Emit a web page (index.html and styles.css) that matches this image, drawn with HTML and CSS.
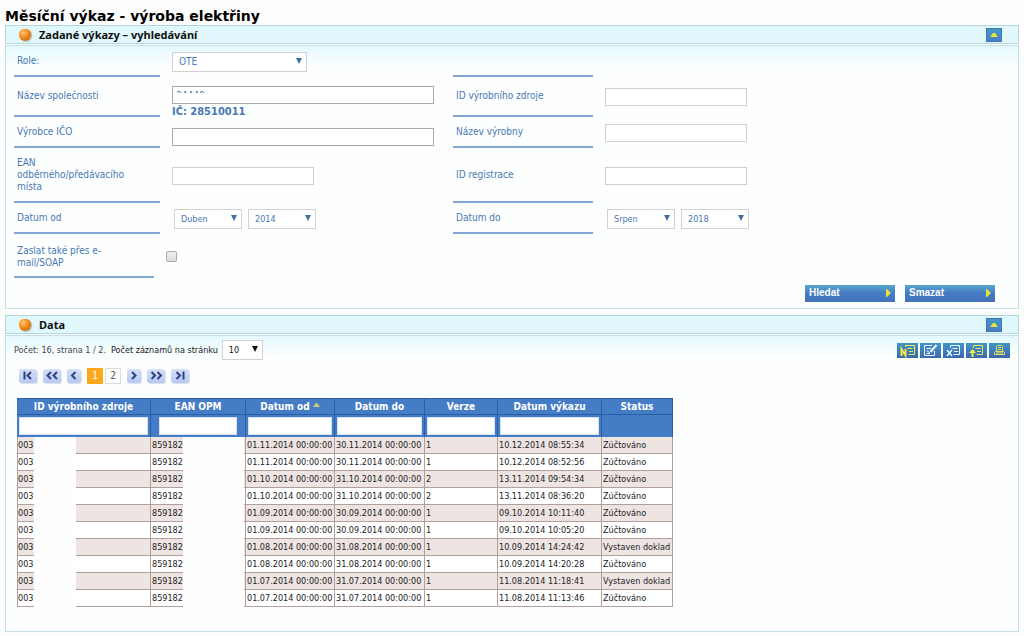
FILE: index.html
```html
<!DOCTYPE html>
<html lang="cs">
<head>
<meta charset="utf-8">
<title>Měsíční výkaz - výroba elektřiny</title>
<link rel="stylesheet" href="styles.css">
</head>
<body>
<h1 class="title">Měsíční výkaz - výroba elektřiny</h1>

<section class="panel">
  <header class="panel-head">
    <span class="ball"></span>
    <h2>Zadané výkazy – vyhledávání</h2>
    <button class="fold" type="button" aria-label="Sbalit"><svg width="8" height="4" viewBox="0 0 8 4"><path d="M0 4L3 0h2l3 4z" fill="#e8e33c"/></svg></button>
  </header>
  <form class="panel-body search">
    <div class="grid">
      <label class="lbl role" for="role">Role:</label>
      <div class="field"><span class="select wide"><select id="role"><option>OTE</option></select></span></div>
      <span class="lbl"></span><span></span>

      <label class="lbl company" for="company">Název společnosti</label>
      <div class="field stack"><span class="masked"><input class="text long" id="company" type="text" value="24440"></span><strong>IČ: 28510011</strong></div>
      <label class="lbl" for="source">ID výrobního zdroje</label>
      <div class="field"><input class="text" id="source" type="text"></div>

      <label class="lbl" for="ico">Výrobce IČO</label>
      <div class="field low"><input class="text long" id="ico" type="text"></div>
      <label class="lbl" for="plant">Název výrobny</label>
      <div class="field"><input class="text" id="plant" type="text"></div>

      <label class="lbl ean" for="ean">EAN odběrného/předávacího místa</label>
      <div class="field"><input class="text" id="ean" type="text"></div>
      <label class="lbl" for="reg">ID registrace</label>
      <div class="field"><input class="text" id="reg" type="text"></div>

      <label class="lbl" for="from">Datum od</label>
      <div class="field dates">
        <span class="select"><select id="from"><option>Duben</option></select></span>
        <span class="select"><select aria-label="Rok od"><option>2014</option></select></span>
      </div>
      <label class="lbl" for="to">Datum do</label>
      <div class="field dates">
        <span class="select"><select id="to"><option>Srpen</option></select></span>
        <span class="select"><select aria-label="Rok do"><option>2018</option></select></span>
      </div>
    </div>
    <div class="mail">
      <label class="lbl" for="mail">Zaslat také přes e-mail/SOAP</label>
      <input id="mail" type="checkbox">
    </div>
    <div class="actions">
      <button class="action" type="submit">Hledat<svg width="5" height="8" viewBox="0 0 5 8"><path d="M0 0h1l4 4-4 4H0z" fill="#e3e33a"/></svg></button>
      <button class="action" type="reset">Smazat<svg width="5" height="8" viewBox="0 0 5 8"><path d="M0 0h1l4 4-4 4H0z" fill="#e3e33a"/></svg></button>
    </div>
  </form>
</section>

<section class="panel">
  <header class="panel-head">
    <span class="ball"></span>
    <h2>Data</h2>
    <button class="fold" type="button" aria-label="Sbalit"><svg width="8" height="4" viewBox="0 0 8 4"><path d="M0 4L3 0h2l3 4z" fill="#e8e33c"/></svg></button>
  </header>
  <div class="panel-body data">
    <div class="bar">
      <span class="count">Počet: 16, strana 1 / 2.</span>
      <label for="per">Počet záznamů na stránku</label>
      <span class="select small"><select id="per"><option>10</option></select></span>
      <div class="tools">
        <button class="tool" type="button" aria-label="Nový"><svg viewBox="0 0 21 15"><g fill="none" stroke="#eee84a"><path d="M8.500 4V2.500h9v9h-6M10.500 5.500h5M12 8.500h4"/><path d="M4.500 13V6l4 6.500V6" stroke-width="2"/></g></svg></button>
        <button class="tool" type="button" aria-label="Upravit"><svg viewBox="0 0 21 15"><g fill="none" stroke="#eef8ff"><path d="M12 2.500H4.500v10h10V8M6.500 5.500h5M6.500 8h2M6.500 10.500h3"/><path d="M16.500 2l-6 7" stroke-width="2"/><path d="M10 10.500h-1v-2"/></g></svg></button>
        <button class="tool" type="button" aria-label="Export"><svg viewBox="0 0 21 15"><g fill="none" stroke="#eef8ff"><path d="M7.500 5V2.500h9v9h-6M9.500 5.500h5M11 8.500h4"/><path d="M4 7l5 6M9 7l-5 6" stroke-width="1.500"/></g></svg></button>
        <button class="tool" type="button" aria-label="Import"><svg viewBox="0 0 21 15"><g fill="none" stroke="#eee84a"><path d="M7.500 5V2.500h9v9h-6M9.500 5.500h5M11 8.500h4"/><path d="M6.500 14V8" stroke-width="2"/></g><path d="M3 10l3.500-4 3.500 4z" fill="#eee84a"/></svg></button>
        <button class="tool" type="button" aria-label="Tisk"><svg viewBox="0 0 21 15"><g fill="none" stroke="#e6df5a"><path d="M7.500 8V3.500l1-1h4l1 1V8M9 4.500h3M9 6.500h3M5.500 9.500l1-1h8l1 1v2h-10zM7 10h7"/></g></svg></button>
      </div>
    </div>
    <nav class="pager" aria-label="Stránkování">
      <button class="pg" type="button" aria-label="První"><svg width="18" height="14" viewBox="0 0 18 14"><path d="M5.500 2.500v8M12 3L8.500 6.500 12 10"/></svg></button>
      <button class="pg" type="button" aria-label="O více zpět"><svg width="18" height="14" viewBox="0 0 18 14"><path d="M8 3L4.500 6.500 8 10M14 3l-3.500 3.500L14 10"/></svg></button>
      <button class="pg" type="button" aria-label="Předchozí"><svg width="14" height="14" viewBox="0 0 14 14"><path d="M8.500 3L5 6.500 8.500 10"/></svg></button>
      <span class="pages"><button class="num current" type="button">1</button><button class="num" type="button">2</button></span>
      <button class="pg" type="button" aria-label="Další"><svg width="14" height="14" viewBox="0 0 14 14"><path d="M5 3l3.500 3.500L5 10"/></svg></button>
      <button class="pg" type="button" aria-label="O více vpřed"><svg width="18" height="14" viewBox="0 0 18 14"><path d="M4.500 3L8 6.500 4.500 10M10.500 3L14 6.500 10.500 10"/></svg></button>
      <button class="pg" type="button" aria-label="Poslední"><svg width="18" height="14" viewBox="0 0 18 14"><path d="M5.500 3L9 6.500 5.500 10M12.500 2.500v8"/></svg></button>
    </nav>
    <table class="table">
      <colgroup><col class="c1"><col class="c2"><col class="c3"><col class="c4"><col class="c5"><col class="c6"><col class="c7"></colgroup>
      <thead>
        <tr class="names"><th>ID výrobního zdroje</th><th>EAN OPM</th><th>Datum od <svg width="7" height="4" viewBox="0 0 7 4"><path d="M0 4L3 0h1l3 4z" fill="#d8c878"/></svg></th><th>Datum do</th><th>Verze</th><th>Datum výkazu</th><th>Status</th></tr>
        <tr class="filters"><th><input aria-label="Filtr ID" type="text"></th><th class="inset"><input aria-label="Filtr EAN" type="text"></th><th><input aria-label="Filtr datum od" type="text"></th><th><input aria-label="Filtr datum do" type="text"></th><th><input aria-label="Filtr verze" type="text"></th><th><input aria-label="Filtr datum výkazu" type="text"></th><th></th></tr>
      </thead>
      <tbody>
        <tr><td class="id">003</td><td class="opm">859182-</td><td>01.11.2014 00:00:00</td><td>30.11.2014 00:00:00</td><td>1</td><td>10.12.2014 08:55:34</td><td>Zúčtováno</td></tr>
        <tr><td class="id">003</td><td class="opm">859182-</td><td>01.11.2014 00:00:00</td><td>30.11.2014 00:00:00</td><td>1</td><td>10.12.2014 08:52:56</td><td>Zúčtováno</td></tr>
        <tr><td class="id">003</td><td class="opm">859182-</td><td>01.10.2014 00:00:00</td><td>31.10.2014 00:00:00</td><td>2</td><td>13.11.2014 09:54:34</td><td>Zúčtováno</td></tr>
        <tr><td class="id">003</td><td class="opm">859182-</td><td>01.10.2014 00:00:00</td><td>31.10.2014 00:00:00</td><td>2</td><td>13.11.2014 08:36:20</td><td>Zúčtováno</td></tr>
        <tr><td class="id">003</td><td class="opm">859182-</td><td>01.09.2014 00:00:00</td><td>30.09.2014 00:00:00</td><td>1</td><td>09.10.2014 10:11:40</td><td>Zúčtováno</td></tr>
        <tr><td class="id">003</td><td class="opm">859182-</td><td>01.09.2014 00:00:00</td><td>30.09.2014 00:00:00</td><td>1</td><td>09.10.2014 10:05:20</td><td>Zúčtováno</td></tr>
        <tr><td class="id">003</td><td class="opm">859182-</td><td>01.08.2014 00:00:00</td><td>31.08.2014 00:00:00</td><td>1</td><td>10.09.2014 14:24:42</td><td>Vystaven doklad</td></tr>
        <tr><td class="id">003</td><td class="opm">859182-</td><td>01.08.2014 00:00:00</td><td>31.08.2014 00:00:00</td><td>1</td><td>10.09.2014 14:20:28</td><td>Zúčtováno</td></tr>
        <tr><td class="id">003</td><td class="opm">859182-</td><td>01.07.2014 00:00:00</td><td>31.07.2014 00:00:00</td><td>1</td><td>11.08.2014 11:18:41</td><td>Vystaven doklad</td></tr>
        <tr><td class="id">003</td><td class="opm">859182-</td><td>01.07.2014 00:00:00</td><td>31.07.2014 00:00:00</td><td>1</td><td>11.08.2014 11:13:46</td><td>Zúčtováno</td></tr>
      </tbody>
    </table>
  </div>
</section>
</body>
</html>
```

FILE: styles.css
```css
* { box-sizing: border-box; }
body { margin: 0; padding: 7px 5px 4px; background: #fdfdfd; color: #222; font: 10px/12px "DejaVu Sans Condensed", "Noto Sans", sans-serif; }
button, input, select { font: inherit; color: inherit; margin: 0; border-radius: 0; }
button { padding: 0; border: 0; }
svg { display: block; }

.title { margin: 0; font: bold 14px/18px "DejaVu Sans", Verdana, sans-serif; color: #000; white-space: nowrap; }
.panel { margin-bottom: 6px; }
.panel-head { display: flex; align-items: center; height: 19px; padding: 0 16px 0 13px; border: 1px solid #b5d5df; background: #e0f8fc; }
.panel-head h2 { flex: 1; margin: 0; padding-left: 8px; font: bold 11px/16px "Noto Sans", "Open Sans", sans-serif; color: #111; }
.ball { width: 12px; height: 12px; border-radius: 5px 5px 6px 6px; background: radial-gradient(circle at 35% 30%, #ffc474, #ee8c1c 45%, #b75a08); box-shadow: 1px 1px 1px #b9b9b0; }
.fold { display: flex; align-items: center; justify-content: center; width: 16px; height: 14px; border: 1px solid #3f79b5; background: linear-gradient(#4299c8, #4b7dc2); }
.panel-body { margin-top: 1px; border: 1px solid #c5dfe8; background: linear-gradient(#e4f9fd, #fdfefe 22px); }

/* search form */
.search { color: #4779b5; padding: 0 23px 6px 8px; }
.grid { display: grid; grid-template-columns: 146px 269px 140px minmax(150px, 1fr); column-gap: 12px; grid-template-rows: 31px 40px 31px 55px 31px; }
.lbl { display: flex; align-items: center; padding: 0 20px 0 3px; border-bottom: 2px solid #84a5d6; }
.field { display: flex; align-items: center; }
.stack { flex-direction: column; align-items: flex-start; padding-top: 9px; }
.stack strong { font-size: 11px; line-height: 15px; }
.low { align-items: flex-end; padding-bottom: 2px; }
.text { width: 142px; height: 18px; padding: 0 3px; border: 1px solid #d0d0d0; background: #fff; }
.long { width: 262px; border-color: #a9a9a9; }
.masked { position: relative; display: flex; }
.masked::after { content: ""; position: absolute; left: 2px; top: 7px; width: 60px; height: 9px; background: #fff; }
.dates { gap: 6px; padding-left: 2px; }
.select { position: relative; display: block; width: 68px; height: 20px; }
.select select { width: 100%; height: 100%; padding: 0 6px; border: 1px solid #d2d2d2; background: #fff; appearance: none; }
.dates select { font-size: 9px; }
.select::after { content: ""; position: absolute; right: 5px; top: 6px; border: 3px solid transparent; border-top: 6px solid #416f9e; border-bottom: 0; }
.wide { width: 135px; }
.mail { display: flex; align-items: center; gap: 12px; }
.mail .lbl { width: 140px; height: 44px; padding: 3px 40px 0 3px; }
.mail input { appearance: none; width: 11px; height: 11px; border: 1px solid #aaa; border-radius: 2px; background: linear-gradient(#eee, #ddd); }
.actions { display: flex; justify-content: flex-end; gap: 10px; margin-top: 7px; }
.action { display: flex; align-items: center; justify-content: space-between; width: 90px; height: 17px; padding: 0 4px 2px 4px; background: linear-gradient(#55a6cb, #4579c4 50%, #4274bd); color: #fff; font: bold 10px/12px "Liberation Sans", Arial, sans-serif; }

/* records */
.data { padding: 4px 8px 24px; }
.bar { display: flex; align-items: center; height: 20px; font-size: 9px; }
.count { color: #444; margin-right: 5px; }
.small { width: 41px; margin-left: 4px; color: #111; }
.small::after { border-top-color: #111; }
.tools { display: flex; gap: 2px; margin-left: auto; }
.tool { width: 21px; height: 15px; background: linear-gradient(#4296c6, #3b67b0); }
.pager { display: flex; align-items: center; gap: 6px; height: 16px; margin: 8px 0 14px 5px; }
.pg { background: linear-gradient(#d5e0f8, #b6c9f3); border-radius: 2px; box-shadow: 1px 1px 0 #dfe2ea; }
.pg path { fill: none; stroke: #2c4383; stroke-width: 2; }
.pages { display: flex; gap: 2px; }
.num { width: 16px; height: 16px; border: 1px solid #ddd; background: #fff; color: #555; }
.num.current { border-color: #fba81c; background: #fba81c; color: #fff; }

.table { table-layout: fixed; width: 656px; margin-left: 3px; border-spacing: 0; border-collapse: separate; }
.c1 { width: 134px; } .c2 { width: 95px; } .c3 { width: 89px; } .c4 { width: 90px; } .c5 { width: 73px; } .c6 { width: 104px; } .c7 { width: 71px; }
.table th { padding: 0; background: #457cc6; border-right: 1px solid #2c5da4; color: #fff; white-space: nowrap; }
.names th { height: 17px; border-top: 1px solid #2c5da4; border-bottom: 1px solid #2c5da4; }
.names svg { display: inline-block; vertical-align: 3px; }
.filters th { height: 22px; padding: 0 2px; }
.filters .inset { padding: 0 8px; }
.filters input { display: block; width: 100%; height: 18px; padding: 0 2px; border: 1px solid #d5e2f3; background: #fff; color: #222; }
.table td { position: relative; height: 17px; padding: 0 0 0 1px; border-right: 1px solid #b0a09b; border-bottom: 1px solid #b0a09b; font-size: 9px; line-height: 16px; white-space: nowrap; color: #222; background: #fff; }
.table td:first-child { padding: 0; border-left: 1px solid #b0a09b; }
.table tr:nth-child(odd) td { background: #eee5e2; }
.table .id::after, .table .opm::after { content: ""; position: absolute; top: 0; bottom: -1px; background: #fefefe; }
.table .id::after { left: 16px; width: 42px; }
.table .opm::after { left: 32px; right: 1px; }
```
